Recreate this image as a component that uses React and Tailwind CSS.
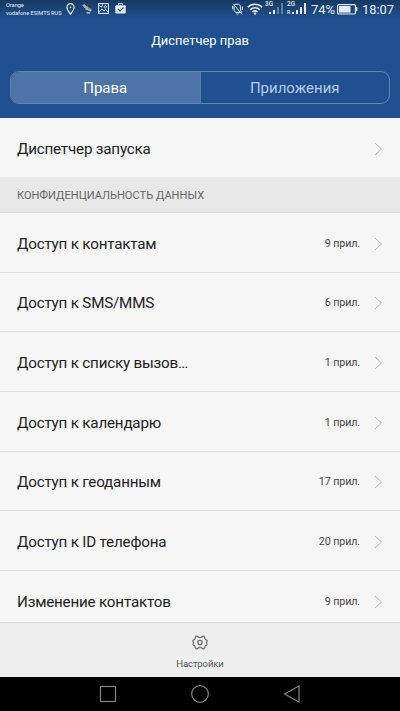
import React from "react";

const rows = [
  { label: "Доступ к контактам", count: "9 прил.", size: "h-[60px]" },
  { label: "Доступ к SMS/MMS", count: "6 прил.", size: "h-[59px]" },
  { label: "Доступ к списку вызов…", count: "1 прил.", size: "h-[60px]" },
  { label: "Доступ к календарю", count: "1 прил.", size: "h-[60px]" },
  { label: "Доступ к геоданным", count: "17 прил.", size: "h-[59px]" },
  { label: "Доступ к ID телефона", count: "20 прил.", size: "h-[60px]" },
  { label: "Изменение контактов", count: "9 прил.", size: "h-[60px]" },
];

function Chevron() {
  return (
    <svg className="ml-[14px] h-[14px] w-[9px] shrink-0" viewBox="0 0 9 14" fill="none" stroke="#b9b9b9">
      <path d="M1 1l6.5 6L1 13" />
    </svg>
  );
}

function Row({ label, count, size }) {
  return (
    <div className={`flex shrink-0 items-center border-b border-[#e0e0e0] pt-[2px] pr-[17px] pl-[17px] ${size}`}>
      <span className="flex-1 whitespace-nowrap text-[15.2px] leading-5 tracking-[-0.2px] text-[#222]">{label}</span>
      <span className="text-[10.7px] leading-4 tracking-[-0.1px] text-[#484848]">{count}</span>
      <Chevron />
    </div>
  );
}

function Bars({ lit }) {
  return (
    <svg className="h-[12px] w-[14px]" viewBox="0 0 14 12" fill="#e3ebf5">
      <rect x="0" y="9" width="2" height="2" />
      <rect x="4" y="7" width="2" height="4" opacity={lit > 1 ? 1 : 0.35} />
      <rect x="8" y="4" width="2" height="7" opacity={lit > 2 ? 1 : 0.35} />
      <rect x="12" y="0" width="2" height="11" opacity={lit > 3 ? 1 : 0.35} />
    </svg>
  );
}

function StatusBar() {
  return (
    <div className="flex h-[18px] shrink-0 items-start bg-gradient-to-b from-[#173962] to-[#20508f] pl-[6px] text-[#e3ebf5]">
      <div className="w-[56px] pt-[1px] text-[5.7px] leading-[8px] tracking-[-0.06px] whitespace-nowrap">
        <div>Orange</div>
        <div>vodafone ES|MTS RUS</div>
      </div>
      <svg className="ml-[4px] mt-[3px] h-[12px] w-[9px]" viewBox="0 0 9 12" fill="none" stroke="currentColor" strokeWidth="1.2">
        <path d="M4.5 11.2C2.8 8.8.9 6.6.9 4.3a3.6 3.6 0 0 1 7.2 0c0 2.3-1.9 4.5-3.6 6.9z" />
        <circle cx="4.5" cy="4.3" r=".9" fill="currentColor" stroke="none" />
      </svg>
      <svg className="ml-[7px] mt-[4px] h-[10px] w-[10px]" viewBox="0 0 10 10" fill="#a9aeb0" stroke="#a9aeb0" strokeWidth=".7">
        <path d="M.6 1.3l1.8-.9 1.9 2L2.8 3.9zM6.2 5.5l1.5-1.3 1.9 2L8 7.6z" />
        <path d="M3.5 2.8l3.3 3.6M6 3L3.6 5.7" strokeWidth="2" />
        <path d="M4.5 8.7c1.6.4 2.4 0 3.6.4" fill="none" stroke="#d9cd9c" strokeWidth="1.2" />
      </svg>
      <svg className="ml-[6px] mt-[3px] h-[11px] w-[11px]" viewBox="0 0 11 11" fill="none" stroke="currentColor">
        <rect x=".6" y=".6" width="9.8" height="9.8" />
        <path d="M1.2 2.5l2.3 1.6 1.2-2.8M1 9l3-3 2 2 1.5-1.5L10 9" strokeWidth=".9" />
        <circle cx="7.3" cy="3.9" r="1.2" strokeWidth=".8" />
      </svg>
      <svg className="ml-[6px] mt-[3px] h-[11px] w-[11px]" viewBox="0 0 11 11">
        <path d="M3.5 2.5V.8h4v1.7" fill="none" stroke="currentColor" strokeWidth="1.1" />
        <rect x=".3" y="2.2" width="10.4" height="8.4" rx="1" fill="currentColor" />
        <path d="M3 6l2 2 3.5-3.5" fill="none" stroke="#1b457d" strokeWidth="1.2" />
      </svg>
      <div className="flex-1" />
      <svg className="mt-[3px] h-[12px] w-[11px]" viewBox="0 0 11 12" fill="none" stroke="currentColor" strokeWidth="1">
        <path d="M3.2 1.2h3.4l1.6 1.2.5 5.2 1 1.8H3.6L2.2 7.4l-.3-4zM4.4 10.7c.5.7 1.7.7 2.2 0M.6 2.8v3.4M10.4 3.5v3.4M1.2.8l8.6 10.4" />
      </svg>
      <svg className="ml-[4px] mt-[3px] h-[12px] w-[16px]" viewBox="0 0 16 12" fill="none" stroke="currentColor" strokeWidth="1.5">
        <path d="M.8 4.2c4-4 10.4-4 14.4 0M3.2 6.7c2.7-2.6 6.9-2.6 9.6 0M5.5 9c1.4-1.3 3.6-1.3 5 0" />
        <circle cx="8" cy="10.6" r="1.2" fill="currentColor" stroke="none" />
      </svg>
      <div className="ml-[2px] flex h-[15px] w-[19px] items-start">
        <span className="w-[4px] pt-px text-[6.4px] leading-[6px] font-medium">3G</span>
        <span className="pt-[3px]"><Bars lit={2} /></span>
      </div>
      <div className="ml-[3px] flex h-[15px] w-[19px] items-start">
        <span className="flex w-[5px] flex-col pt-px text-[6.4px] leading-[6px] font-medium">
          <span>2G</span>
          <span className="pt-[3px] text-[5px] leading-[5px]">R</span>
        </span>
        <span className="pt-[3px]"><Bars lit={4} /></span>
      </div>
      <span className="ml-[5px] w-[26px] text-[13px] leading-[19px] tracking-[-0.1px]">74%</span>
      <svg className="mt-[4px] h-[11px] w-[21px]" viewBox="0 0 21 11" fill="none">
        <rect x=".6" y=".6" width="17.8" height="9.4" rx="1" stroke="currentColor" strokeWidth="1.1" />
        <rect x="2" y="2" width="11.5" height="6.6" fill="currentColor" />
        <path d="M19.7 3v4.3" stroke="currentColor" strokeWidth="1.4" />
      </svg>
      <span className="ml-[4px] w-[38px] text-[12.9px] leading-[19px]">18:07</span>
    </div>
  );
}

export default function App() {
  return (
    <div className="flex h-[711px] w-[400px] flex-col overflow-hidden bg-[#f6f6f6] font-['Roboto',sans-serif]">
      <header className="flex h-[118px] shrink-0 flex-col bg-[#20508f]">
        <StatusBar />
        <h1 className="mt-[14px] text-center text-[12.9px] leading-[18px] text-white">Диспетчер прав</h1>
        <div className="mx-[10px] mt-[21px] flex h-[33px] overflow-hidden rounded-[9px] border border-[#6283b1]">
          <div className="flex flex-1 items-center justify-center border-r border-[#5c7fae] bg-[#4e74a7] text-[15px] leading-5 text-white">Права</div>
          <div className="flex flex-1 items-center justify-center text-[15px] leading-5 text-[#b4cbec]">Приложения</div>
        </div>
      </header>
      <main className="flex min-h-0 flex-1 flex-col overflow-hidden">
        <div className="flex h-[59px] shrink-0 items-center px-[17px] pt-[2px]">
          <span className="flex-1 text-[15.2px] leading-5 tracking-[-0.2px] text-[#222]">Диспетчер запуска</span>
          <Chevron />
        </div>
        <div className="flex h-[36px] shrink-0 items-center border-b border-[#dadada] bg-[#e8e8e8] px-[17px] pt-[2px] text-[11.1px] leading-4 text-[#666]">
          КОНФИДЕНЦИАЛЬНОСТЬ ДАННЫХ
        </div>
        {rows.map((row) => (
          <Row key={row.label} {...row} />
        ))}
      </main>
      <footer className="flex h-[55px] shrink-0 flex-col items-center border-t border-[#dcdcdc] bg-[#eeeeee] pt-[12px]">
        <svg className="h-[15px] w-[16px]" viewBox="0 0 16 16" preserveAspectRatio="none" fill="none" stroke="#6c6c6c" strokeWidth="1.3">
          <path d="M6.3 2.3Q5.6 1 4.3 1.2Q2.9 1.9 3.1 3.8Q2.8 5 1.5 5.3Q.4 6 1.3 7.2Q1.8 8 1.3 8.8Q.4 10 1.5 10.7Q2.8 11 3.1 12.2Q2.9 14.1 4.3 14.8Q5.6 15 6.3 13.7Q8 12.9 9.7 13.7Q10.4 15 11.7 14.8Q13.1 14.1 12.9 12.2Q13.2 11 14.5 10.7Q15.6 10 14.7 8.8Q14.2 8 14.7 7.2Q15.6 6 14.5 5.3Q13.2 5 12.9 3.8Q13.1 1.9 11.7 1.2Q10.4 1 9.7 2.3Q8 3.1 6.3 2.3z" />
          <circle cx="8" cy="8" r="2.2" />
        </svg>
        <span className="mt-[7px] text-[9.5px] leading-[14px] tracking-[-0.1px] text-[#555]">Настройки</span>
      </footer>
      <nav className="flex h-[34px] shrink-0 items-center justify-center gap-[74px] bg-black">
        <svg className="h-[18px] w-[18px]" viewBox="0 0 18 18" fill="none" stroke="#858585" strokeWidth="1.2">
          <rect x="1.5" y="1.5" width="15" height="15" />
        </svg>
        <svg className="h-[18px] w-[18px]" viewBox="0 0 18 18" fill="none" stroke="#858585" strokeWidth="1.2">
          <circle cx="9" cy="9" r="8.3" />
        </svg>
        <svg className="h-[18px] w-[18px]" viewBox="0 0 18 18" fill="none" stroke="#858585" strokeWidth="1.2">
          <path d="M16 1v16L1.5 9z" />
        </svg>
      </nav>
    </div>
  );
}
